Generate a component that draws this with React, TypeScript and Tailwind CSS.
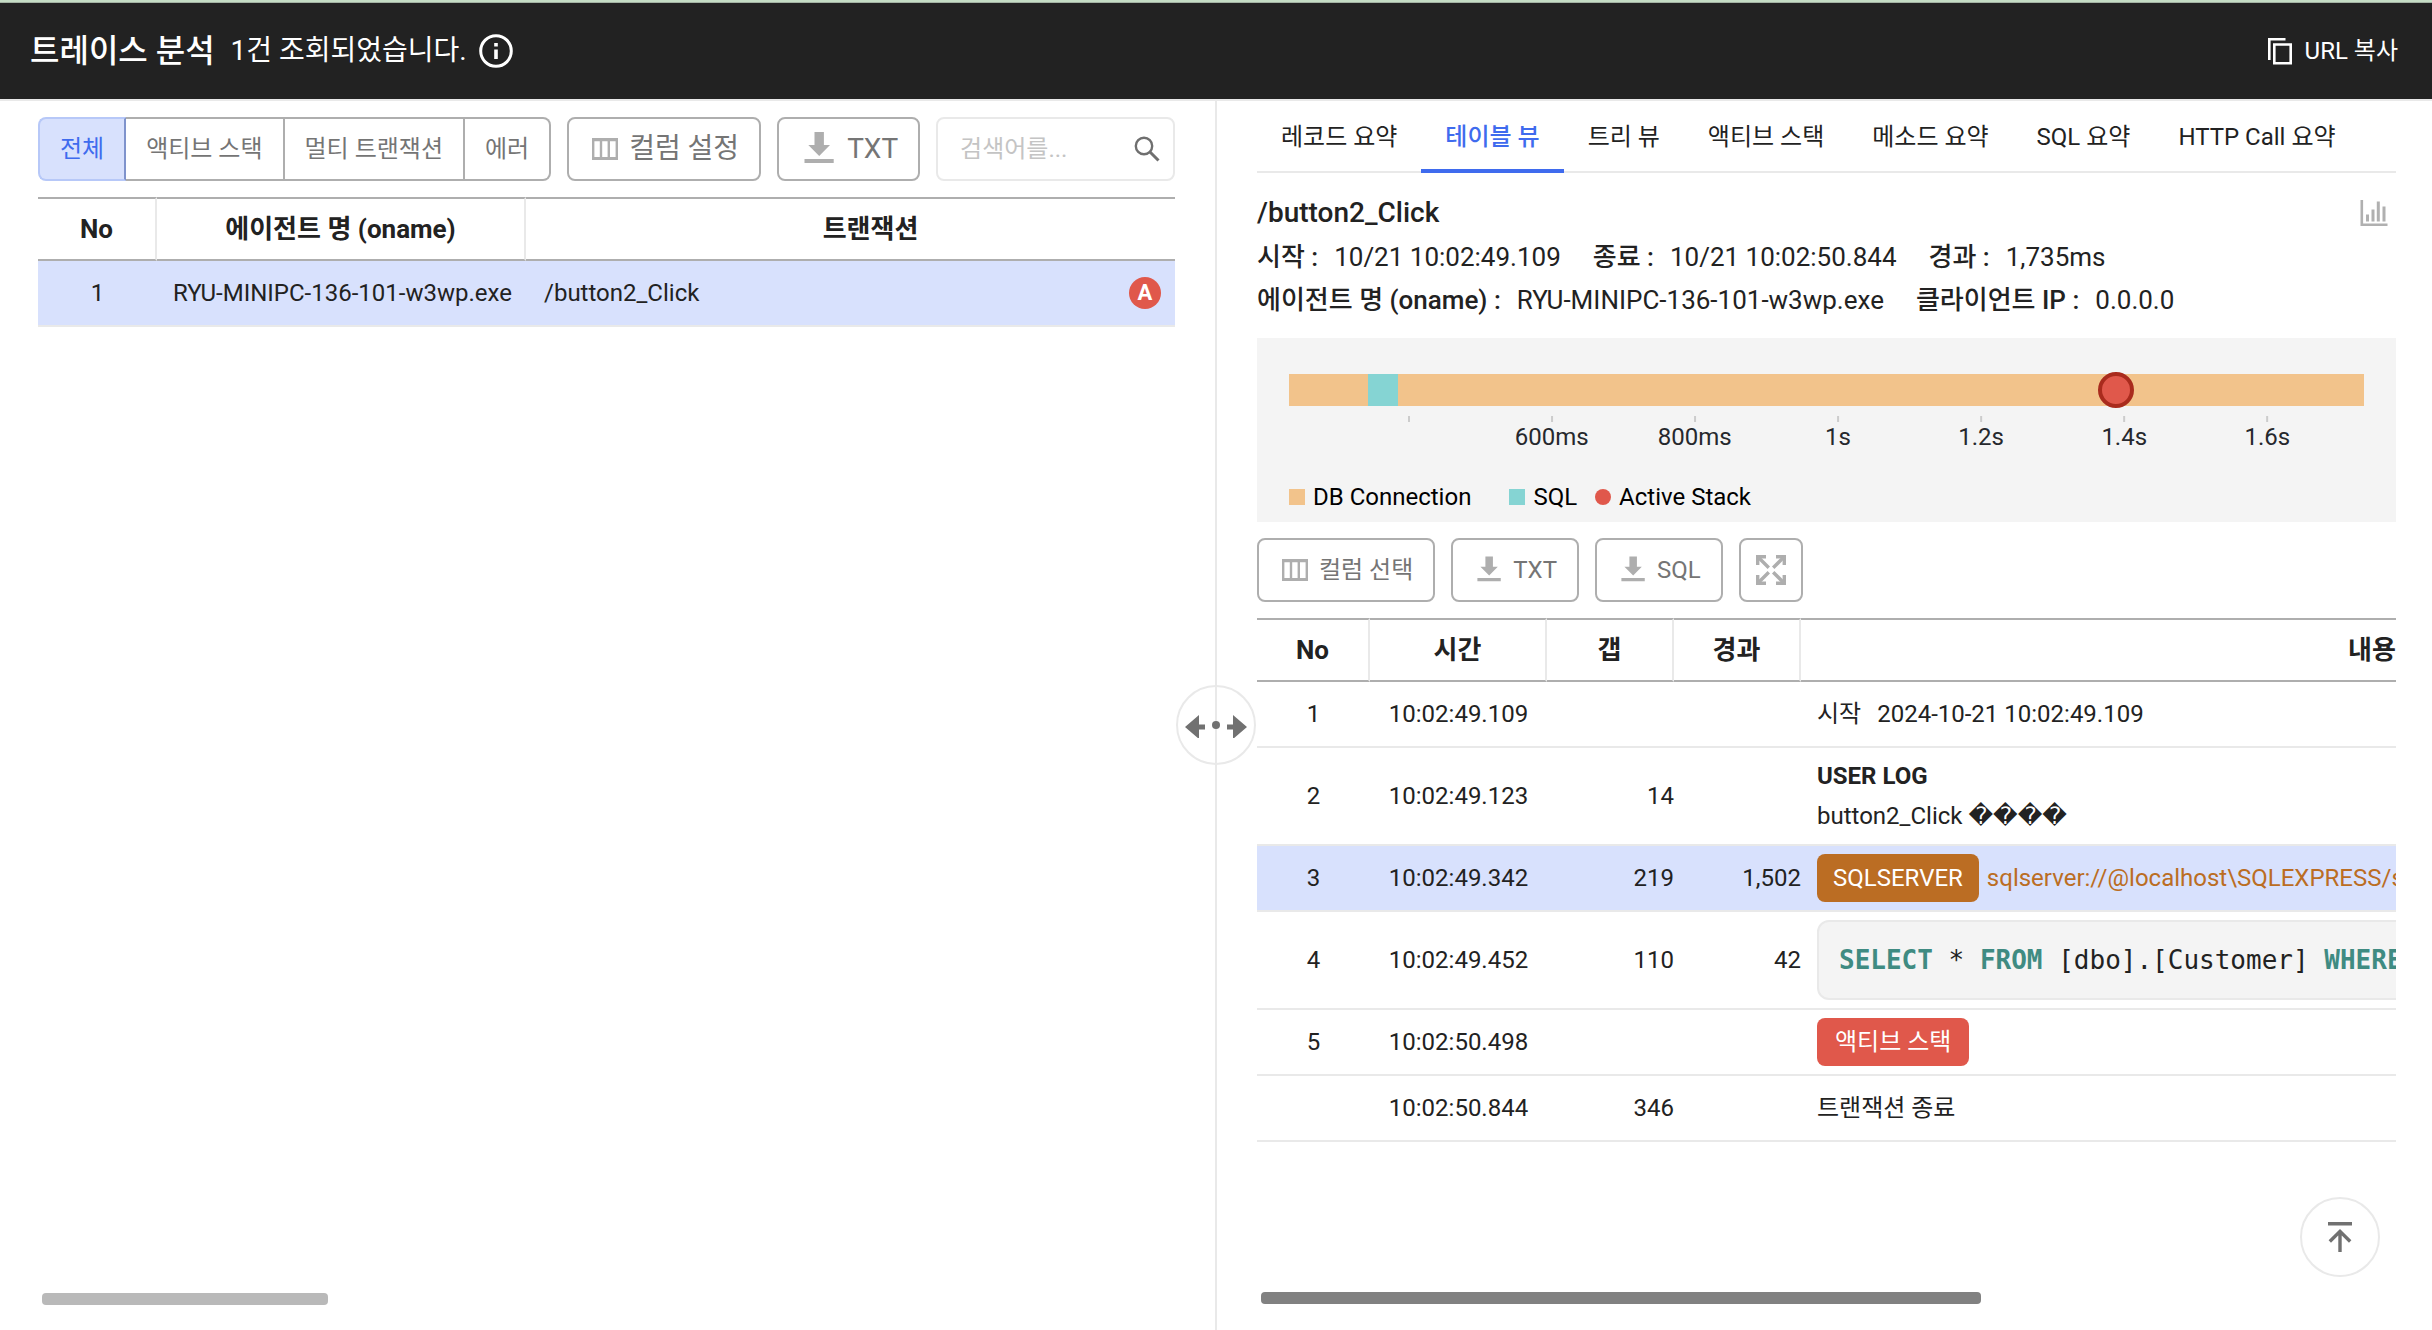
import type { ReactNode } from 'react';
import clsx from 'clsx';

const FILTERS = ['전체', '액티브 스택', '멀티 트랜잭션', '에러'];

const TABS = ['레코드 요약', '테이블 뷰', '트리 뷰', '액티브 스택', '메소드 요약', 'SQL 요약', 'HTTP Call 요약'];

// visible window of the timeline, in ms
const RANGE_START = 233;
const RANGE_LENGTH = 1502;

const TICKS = [
  { ms: 400, label: '' },
  { ms: 600, label: '600ms' },
  { ms: 800, label: '800ms' },
  { ms: 1000, label: '1s' },
  { ms: 1200, label: '1.2s' },
  { ms: 1400, label: '1.4s' },
  { ms: 1600, label: '1.6s' },
];

const toPercent = (ms: number) => `${((ms - RANGE_START) / RANGE_LENGTH) * 100}%`;

function InfoIcon() {
  return (
    <svg width="34" height="34" viewBox="0 0 34 34" fill="none" aria-hidden="true">
      <circle cx="17" cy="17" r="15.3" stroke="currentColor" strokeWidth="3" />
      <path d="M15.2 9h3.6v3.4h-3.6zM15.2 15.4h3.6V25h-3.6z" fill="currentColor" />
    </svg>
  );
}

function CopyIcon() {
  return (
    <svg width="26" height="28" viewBox="0 0 26 28" fill="none" stroke="currentColor" strokeWidth="2.6" aria-hidden="true">
      <path d="M2.3 23V2.3H18.5" />
      <path d="M7.3 7.5h16.4v18.7H7.3z" />
    </svg>
  );
}

function ColumnsIcon() {
  return (
    <svg width="32" height="32" viewBox="0 0 32 32" fill="#aeaeae" aria-hidden="true">
      <path
        fillRule="evenodd"
        d="M3 5h26v22H3zM5.4 8.200v15.800h5.400V8.200zM13.200 8.200v15.800h5.400V8.200zM21 8.200v15.800h5.600V8.200z"
      />
    </svg>
  );
}

function DownloadIcon({ size }: { size: number }) {
  return (
    <svg width={size} height={size} viewBox="0 0 40 40" fill="#aeaeae" aria-hidden="true">
      <path d="M15.5 3h9.4v13H31L20.2 27 9.300 16h6.200zM5.500 30h29.200v4H5.500z" />
    </svg>
  );
}

function SearchIcon() {
  return (
    <svg width="28" height="28" viewBox="0 0 28 28" fill="none" stroke="#6f6f6f" strokeWidth="2.4" aria-hidden="true">
      <circle cx="11" cy="11" r="8.2" />
      <path d="M17 17l8.5 8.5" strokeWidth="3" />
    </svg>
  );
}

function ChartIcon() {
  return (
    <svg width="28" height="28" viewBox="0 0 28 28" fill="none" stroke="#b0b0b0" aria-hidden="true">
      <path d="M1.8 1v24.800H27.500" strokeWidth="2.6" />
      <path d="M7.5 22.500v-7M13 22.500V10.500M18.300 22.500V2.500M24 22.500V7.500" strokeWidth="3" />
    </svg>
  );
}

function ExpandIcon() {
  return (
    <svg width="30" height="30" viewBox="0 0 30 30" fill="none" stroke="#aeaeae" strokeWidth="3.4" aria-hidden="true">
      <path d="M10 1.700H1.700V10M20 1.700h8.300V10M10 28.300H1.700V20M20 28.300h8.300V20" />
      <path d="M2 2l10.800 10.800M28 2L17.200 12.800M2 28l10.800-10.800M28 28L17.200 17.200" />
    </svg>
  );
}

function SplitIcon() {
  return (
    <svg width="62" height="26" viewBox="0 0 62 26" fill="#717171" aria-hidden="true">
      <path d="M0 15L14 3v9.500h6v5h-6V27zM62 15L48 3v9.500h-6v5h6V27z" />
      <circle cx="31" cy="13" r="4" />
    </svg>
  );
}

function ToTopIcon() {
  return (
    <svg width="26" height="32" viewBox="0 0 26 32" fill="none" stroke="#717171" strokeWidth="3.4" aria-hidden="true">
      <path d="M1 2.700h24M13 31V10M2.800 20.500L13 10.300l10.200 10.200" />
    </svg>
  );
}

type OutlineButtonProps = { icon: ReactNode; children: ReactNode; large?: boolean };

function OutlineButton({ icon, children, large }: OutlineButtonProps) {
  return (
    <button
      type="button"
      className={clsx(
        'flex h-16 shrink-0 items-center gap-2 rounded-lg border-2 border-[#aeaeae] px-5 whitespace-nowrap text-[#757575]',
        large ? 'text-[28px]' : 'text-2xl',
      )}
    >
      {icon}
      {children}
    </button>
  );
}

function InfoItem({ label, children }: { label: string; children: ReactNode }) {
  return (
    <div className="flex gap-4">
      <dt className="font-medium">{label} :</dt>
      <dd>{children}</dd>
    </div>
  );
}

function TransactionList() {
  const th = 'h-16 border-y-2 border-y-[#aeaeae] font-bold';
  const td = 'h-[66px] border-b-2 border-[#e9e9e9]';

  return (
    <section className="flex min-w-0 flex-col pt-4 pr-10 pl-[38px]">
      <div className="flex gap-4">
        <div className="flex shrink-0 text-2xl text-[#757575]">
          {FILTERS.map((label, i) => (
            <button
              key={label}
              type="button"
              className={clsx(
                'h-16 border-2 border-[#aeaeae] whitespace-nowrap',
                i === 0
                  ? 'rounded-l-lg border-[#b7c8f8] border-r-[#7f93cc] bg-[#d8e1fd] px-5 text-[#3f6bee]'
                  : 'border-l-0 px-5',
                i === FILTERS.length - 1 && 'rounded-r-lg',
              )}
            >
              {label}
            </button>
          ))}
        </div>
        <OutlineButton large icon={<ColumnsIcon />}>
          컬럼 설정
        </OutlineButton>
        <OutlineButton large icon={<DownloadIcon size={40} />}>
          TXT
        </OutlineButton>
        <div className="flex h-16 min-w-0 flex-1 items-center rounded-lg border-2 border-[#e9e9e9] pr-3 pl-[22px]">
          <input
            type="text"
            aria-label="검색"
            placeholder="검색어를..."
            className="min-w-0 flex-1 text-2xl outline-none placeholder:text-[#c4c4c4]"
          />
          <button type="button" aria-label="검색">
            <SearchIcon />
          </button>
        </div>
      </div>

      <table className="mt-4 w-full table-fixed border-separate border-spacing-0 text-2xl">
        <colgroup>
          <col className="w-[119px]" />
          <col className="w-[369px]" />
          <col />
        </colgroup>
        <thead className="text-[26px]">
          <tr>
            <th className={clsx(th, 'border-r-2 border-r-[#e9e9e9]')}>No</th>
            <th className={clsx(th, 'border-r-2 border-r-[#e9e9e9]')}>에이전트 명 (oname)</th>
            <th className={clsx(th, 'pl-10')}>트랜잭션</th>
          </tr>
        </thead>
        <tbody>
          <tr className="bg-[#d8e1fd]">
            <td className={clsx(td, 'text-center')}>1</td>
            <td className={clsx(td, 'pl-4 whitespace-nowrap')}>RYU-MINIPC-136-101-w3wp.exe</td>
            <td className={clsx(td, 'pr-[14px] pl-[18px]')}>
              <div className="flex items-center justify-between">
                <span>/button2_Click</span>
                <span className="flex size-8 items-center justify-center rounded-full bg-[#e0584b] text-[22px] font-bold text-white">
                  A
                </span>
              </div>
            </td>
          </tr>
        </tbody>
      </table>

      <div className="mt-auto mb-[25px] px-1">
        <div className="h-3 w-[25.3%] rounded bg-[#b9b9b9]" />
      </div>
    </section>
  );
}

function Timeline() {
  return (
    <div className="bg-[#f4f4f4] px-8 pt-9 pb-[9px]">
      <div className="relative h-8 bg-[#f2c38b]">
        <div
          className="absolute inset-y-0 bg-[#85d4d3]"
          style={{ left: toPercent(343), width: `${(42 / RANGE_LENGTH) * 100}%` }}
        />
        <div
          className="absolute top-1/2 size-9 -translate-1/2 rounded-full border-4 border-[#a92b1d] bg-[#e0584b]"
          style={{ left: toPercent(1389) }}
        />
      </div>
      <div className="relative mt-[10px] h-9">
        {TICKS.map((tick) => (
          <div
            key={tick.ms}
            className="absolute top-0 flex -translate-x-1/2 flex-col items-center text-2xl leading-[30px] text-[#26282d]"
            style={{ left: toPercent(tick.ms) }}
          >
            <span className="h-[6px] w-[2px] bg-[#cccccc]" />
            {tick.label}
          </div>
        ))}
      </div>
      <ul className="mt-[29px] flex gap-[18px] text-2xl text-black">
        <li className="flex items-center gap-2 pr-5">
          <span className="size-4 bg-[#f2c38b]" />
          DB Connection
        </li>
        <li className="flex items-center gap-2">
          <span className="size-4 bg-[#85d4d3]" />
          SQL
        </li>
        <li className="flex items-center gap-2">
          <span className="size-4 rounded-full bg-[#e0584b]" />
          Active Stack
        </li>
      </ul>
    </div>
  );
}

const STEPS: { no: string; time: string; gap: string; elapsed: string; content: ReactNode; tall?: boolean; active?: boolean }[] = [
  {
    no: '1',
    time: '10:02:49.109',
    gap: '',
    elapsed: '',
    content: (
      <div className="flex gap-4">
        <span>시작</span>
        <span>2024-10-21 10:02:49.109</span>
      </div>
    ),
  },
  {
    no: '2',
    time: '10:02:49.123',
    gap: '14',
    elapsed: '',
    tall: true,
    content: (
      <div className="leading-10">
        <p className="font-bold">USER LOG</p>
        <p>
          button2_Click <span className="font-['DejaVu_Sans',sans-serif]">{'\uFFFD\uFFFD\uFFFD\uFFFD'}</span>
        </p>
      </div>
    ),
  },
  {
    no: '3',
    time: '10:02:49.342',
    gap: '219',
    elapsed: '1,502',
    active: true,
    content: (
      <div className="flex items-center gap-2 text-[#bb6d23]">
        <span className="flex h-12 items-center rounded-lg bg-[#bb6d23] px-4 text-white">SQLSERVER</span>
        sqlserver://@localhost\SQLEXPRESS/sa
      </div>
    ),
  },
  {
    no: '4',
    time: '10:02:49.452',
    gap: '110',
    elapsed: '42',
    tall: true,
    content: (
      <pre className="flex h-20 items-center rounded-xl border-2 border-[#e9e9e9] bg-[#f4f4f4] px-5 font-['DejaVu_Sans_Mono',monospace] text-[26px]">
        <code className="font-['DejaVu_Sans_Mono',monospace]">
          <b className="text-[#3f8b82]">SELECT</b> * <b className="text-[#3f8b82]">FROM</b> [dbo].[Customer]{' '}
          <b className="text-[#3f8b82]">WHERE</b>
        </code>
      </pre>
    ),
  },
  {
    no: '5',
    time: '10:02:50.498',
    gap: '',
    elapsed: '',
    content: (
      <span className="inline-flex h-12 items-center rounded-lg bg-[#e0584b] px-[18px] align-middle text-white">액티브 스택</span>
    ),
  },
  { no: '', time: '10:02:50.844', gap: '346', elapsed: '', content: '트랜잭션 종료' },
];

function StepTable() {
  const th = 'h-16 border-y-2 border-r-2 border-y-[#aeaeae] border-r-[#e9e9e9] font-bold';

  return (
    <table className="w-[1688px] table-fixed border-separate border-spacing-0 text-2xl whitespace-nowrap">
      <colgroup>
        <col className="w-[113px]" />
        <col className="w-[177px]" />
        <col className="w-[127px]" />
        <col className="w-[127px]" />
        <col />
      </colgroup>
      <thead className="text-[26px]">
        <tr>
          <th className={th}>No</th>
          <th className={th}>시간</th>
          <th className={th}>갭</th>
          <th className={th}>경과</th>
          <th className={th}>내용</th>
        </tr>
      </thead>
      <tbody>
        {STEPS.map((step) => {
          const td = clsx('border-b-2 border-[#e9e9e9]', step.tall ? 'h-[98px]' : 'h-[66px]');
          return (
            <tr key={step.time} className={clsx(step.active && 'bg-[#d8e1fd]')}>
              <td className={clsx(td, 'text-center')}>{step.no}</td>
              <td className={clsx(td, 'text-center')}>{step.time}</td>
              <td className={clsx(td, 'text-right')}>{step.gap}</td>
              <td className={clsx(td, 'text-right')}>{step.elapsed}</td>
              <td className={clsx(td, 'pl-4')}>{step.content}</td>
            </tr>
          );
        })}
      </tbody>
    </table>
  );
}

function TransactionDetail() {
  return (
    <section className="flex min-w-0 flex-col pr-9 pl-10">
      <nav className="flex h-[72px] shrink-0 border-b-2 border-[#e9e9e9] text-2xl">
        {TABS.map((tab) => (
          <button
            key={tab}
            type="button"
            className={clsx(
              '-mb-[2px] border-b-4 px-6 pt-[3px] whitespace-nowrap',
              tab === '테이블 뷰' ? 'border-[#3f6bee] font-medium text-[#3f6bee]' : 'border-transparent',
            )}
          >
            {tab}
          </button>
        ))}
      </nav>

      <div className="flex items-center justify-between pt-4">
        <h2 className="text-[28px] leading-[47px] font-medium">/button2_Click</h2>
        <button type="button" aria-label="차트" className="mr-2">
          <ChartIcon />
        </button>
      </div>
      <dl className="mb-4 text-[26px] leading-[43px]">
        <div className="flex gap-8">
          <InfoItem label="시작">10/21 10:02:49.109</InfoItem>
          <InfoItem label="종료">10/21 10:02:50.844</InfoItem>
          <InfoItem label="경과">1,735ms</InfoItem>
        </div>
        <div className="flex gap-8">
          <InfoItem label="에이전트 명 (oname)">RYU-MINIPC-136-101-w3wp.exe</InfoItem>
          <InfoItem label="클라이언트 IP">0.0.0.0</InfoItem>
        </div>
      </dl>

      <Timeline />

      <div className="my-4 flex gap-4">
        <OutlineButton icon={<ColumnsIcon />}>컬럼 선택</OutlineButton>
        <OutlineButton icon={<DownloadIcon size={32} />}>TXT</OutlineButton>
        <OutlineButton icon={<DownloadIcon size={32} />}>SQL</OutlineButton>
        <button
          type="button"
          aria-label="전체 화면"
          className="flex size-16 items-center justify-center rounded-lg border-2 border-[#aeaeae]"
        >
          <ExpandIcon />
        </button>
      </div>

      <div className="min-h-0 flex-1 overflow-hidden">
        <StepTable />
      </div>

      <div className="mb-[26px] px-1">
        <div className="h-3 w-[63.7%] rounded bg-[#818181]" />
      </div>
    </section>
  );
}

export default function App() {
  return (
    <div className="flex h-screen flex-col overflow-hidden bg-white font-['Roboto','Noto_Sans_CJK_KR',sans-serif] text-[#222222]">
      <div className="h-[3px] shrink-0 border-b border-[#a3b3a3] bg-[#c5dcc5]" />
      <header className="flex h-[98px] shrink-0 items-center justify-between border-b-2 border-[#e9e9e9] bg-[#222222] pr-[34px] pl-[30px] text-white">
        <div className="flex items-center">
          <h1 className="text-[32px] font-medium">트레이스 분석</h1>
          <p className="ml-4 text-[28px]">1건 조회되었습니다.</p>
          <button type="button" aria-label="안내" className="ml-3">
            <InfoIcon />
          </button>
        </div>
        <button type="button" className="flex items-center gap-3 text-2xl">
          <CopyIcon />
          URL 복사
        </button>
      </header>

      <main className="relative grid min-h-0 flex-1 grid-cols-[minmax(0,1fr)_2px_minmax(0,1fr)] grid-rows-[minmax(0,1fr)]">
        <TransactionList />
        <div className="relative bg-[#e9e9e9]">
          <button
            type="button"
            aria-label="패널 크기 조절"
            className="absolute top-[584px] left-1/2 flex size-20 -translate-x-1/2 items-center justify-center rounded-full border-2 border-[#e9e9e9]"
          >
            <SplitIcon />
          </button>
        </div>
        <TransactionDetail />
        <button
          type="button"
          aria-label="맨 위로"
          className="absolute right-[52px] bottom-[53px] flex size-20 items-center justify-center rounded-full border-2 border-[#e9e9e9] bg-white"
        >
          <ToTopIcon />
        </button>
      </main>
    </div>
  );
}
